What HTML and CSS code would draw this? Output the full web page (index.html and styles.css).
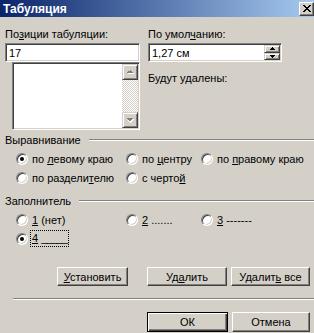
FILE: index.html
```html
<!doctype html>
<html lang="ru">
<head>
    <meta charset="UTF-8">
    <title>Табуляция</title>
    <link rel="stylesheet" href="styles.css">
</head>
<body>
<div class="window">
    <div class="titlebar">
        <span class="title">Табуляция</span>
        <span class="close-btn">
            <svg width="8" height="7" viewBox="0 0 8 7" shape-rendering="crispEdges">
                <path d="M0 0h2v1h-2zM6 0h2v1h-2zM1 1h2v1h-2zM5 1h2v1h-2zM2 2h4v1h-4zM3 3h2v1h-2zM2 4h4v1h-4zM1 5h2v1h-2zM5 5h2v1h-2zM0 6h2v1h-2zM6 6h2v1h-2z" fill="#000"/>
            </svg>
        </span>
    </div>

    <div class="content">
        <div class="top">
            <div class="col">
                <div class="label">По<u>з</u>иции табуляции:</div>
                <div class="edit">17</div>
                <div class="listbox">
                    <div class="list-area"></div>
                    <div class="vscroll">
                        <div class="sbtn">
                            <svg width="7" height="5" viewBox="0 0 7 5" shape-rendering="crispEdges">
                                <path d="M4 1h1v1h1v1h1v1h-6v-1h1v-1h1v-1z" fill="#fff"/>
                                <path d="M3 0h1v1h1v1h1v1h-6v-1h1v-1h1z" fill="#808080"/>
                            </svg>
                        </div>
                        <div class="track"></div>
                        <div class="sbtn">
                            <svg width="7" height="5" viewBox="0 0 7 5" shape-rendering="crispEdges">
                                <path d="M1 1h6v1h-1v1h-1v1h-1v1h-1v-1h-1v-1h-1z" fill="#fff"/>
                                <path d="M0 0h6v1h-1v1h-1v1h-2v-1h-1v-1h-1z" fill="#808080"/>
                            </svg>
                        </div>
                    </div>
                </div>
            </div>
            <div class="col">
                <div class="label">По умол<u>ч</u>анию:</div>
                <div class="edit spin">
                    <span class="spin-text">1,27 см</span>
                    <div class="spin-btns">
                        <div class="spin-btn">
                            <svg width="5" height="3" viewBox="0 0 5 3" shape-rendering="crispEdges"><path d="M2 0h1v1h1v1h1v1h-5v-1h1v-1h1z" fill="#000"/></svg>
                        </div>
                        <div class="spin-btn">
                            <svg width="5" height="3" viewBox="0 0 5 3" shape-rendering="crispEdges"><path d="M0 0h5v1h-1v1h-1v1h-1v-1h-1v-1h-1z" fill="#000"/></svg>
                        </div>
                    </div>
                </div>
                <div class="label deleted">Будут удалены:</div>
            </div>
        </div>

        <div class="group-head"><span>Выравнивание</span><div class="rule"></div></div>
        <div class="radio-grid">
            <div class="radio"><span class="rb checked"></span><span>по <u>л</u>евому краю</span></div>
            <div class="radio"><span class="rb"></span><span>по <u>ц</u>ентру</span></div>
            <div class="radio"><span class="rb"></span><span>по <u>п</u>равому краю</span></div>
            <div class="radio"><span class="rb"></span><span>по раздели<u>т</u>елю</span></div>
            <div class="radio"><span class="rb"></span><span>с черто<u>й</u></span></div>
        </div>

        <div class="group-head fill-head"><span>Заполнитель</span><div class="rule"></div></div>
        <div class="radio-grid">
            <div class="radio"><span class="rb"></span><span><u>1</u> (нет)</span></div>
            <div class="radio"><span class="rb"></span><span><u>2</u> .......</span></div>
            <div class="radio"><span class="rb"></span><span><u>3</u> -------</span></div>
            <div class="radio"><span class="rb checked"></span><span class="focus"><u>4</u> <span class="leader">_____</span></span></div>
        </div>

        <div class="btn-row tab-btns">
            <div class="btn w-set"><span><u>У</u>становить</span></div>
            <div class="btn w-del"><span>Уд<u>а</u>лить</span></div>
            <div class="btn w-all"><span>Удалит<u>ь</u> все</span></div>
        </div>

        <div class="separator"></div>

        <div class="btn-row ok-row">
            <div class="btn default w-ok"><span>ОК</span></div>
            <div class="btn w-cancel"><span>Отмена</span></div>
        </div>
    </div>
</div>
</body>
</html>
```

FILE: styles.css
```css
* {
    box-sizing: border-box;
}
body {
    margin: 0;
    background: #d4d0c8;
    font-family: "Liberation Sans", Arial, sans-serif;
    font-size: 11px;
    color: #000;
}
.window {
    width: 314px;
    height: 333px;
    overflow: hidden;
}

/* заголовок окна */
.titlebar {
    height: 17px;
    display: flex;
    align-items: center;
    justify-content: space-between;
    padding-left: 3px;
    background: linear-gradient(to right, #0a246a, #a6caf0);
}
.title {
    color: #fff;
    font-weight: bold;
    font-size: 12px;
}
.close-btn {
    width: 15px;
    height: 14px;
    display: flex;
    align-items: center;
    justify-content: center;
    background: #d4d0c8;
    border: 1px solid;
    border-color: #fff #404040 #404040 #fff;
    box-shadow: inset -1px -1px #808080;
}

.content {
    padding: 11px 0 0 5px;
}
.label {
    line-height: 13px;
    height: 13px;
    white-space: nowrap;
}

/* верхняя часть */
.top {
    display: grid;
    grid-template-columns: 135px 134px;
    column-gap: 8px;
}
.edit {
    margin-top: 2px;
    height: 19px;
    background: #fff;
    border: 1px solid;
    border-color: #808080 #fff #fff #808080;
    box-shadow: inset 1px 1px #404040, inset -1px -1px #d4d0c8;
    padding-left: 3px;
    display: flex;
    align-items: center;
}
.listbox {
    margin: 0 0 0 7px;
    width: 128px;
    height: 68px;
    display: flex;
    border: 1px solid;
    border-color: #808080 #fff #fff #808080;
    padding: 1px;
    box-shadow: inset 1px 1px #404040, inset -1px -1px #d4d0c8;
    background: #fff;
}
.list-area {
    flex: 1;
}
.vscroll {
    width: 16px;
    display: flex;
    flex-direction: column;
}
.sbtn {
    height: 16px;
    display: flex;
    align-items: center;
    justify-content: center;
    background: #d4d0c8;
    border: 1px solid;
    border-color: #d4d0c8 #404040 #404040 #d4d0c8;
    box-shadow: inset 1px 1px #fff, inset -1px -1px #808080;
}
.track {
    flex: 1;
    background: repeating-conic-gradient(#fff 0 25%, #d4d0c8 0 50%) 0 0 / 2px 2px;
}

.spin {
    justify-content: space-between;
    padding-right: 1px;
}
.spin-btns {
    width: 16px;
    height: 15px;
    display: flex;
    flex-direction: column;
}
.spin-btn {
    flex: 1;
    display: flex;
    align-items: center;
    justify-content: center;
    background: #d4d0c8;
    border: 1px solid;
    border-color: #d4d0c8 #404040 #404040 #d4d0c8;
    box-shadow: inset 1px 1px #fff, inset -1px -1px #808080;
}
.deleted {
    margin-top: 10px;
}

/* группы */
.group-head {
    display: flex;
    align-items: center;
    gap: 8px;
    height: 13px;
    margin-top: 3px;
}
.fill-head {
    margin-top: 7px;
}
.rule {
    flex: 1;
    height: 2px;
    border-top: 1px solid #808080;
    border-bottom: 1px solid #fff;
}
.radio-grid {
    display: grid;
    grid-template-columns: 110px 75px auto;
    grid-auto-rows: 19px;
    padding-left: 11px;
    margin-top: 3px;
}
.radio {
    display: flex;
    align-items: center;
    gap: 4px;
    white-space: nowrap;
}
.rb {
    flex: none;
    width: 12px;
    height: 12px;
    border-radius: 50%;
    background: #fff;
    border: 1px solid;
    border-color: #808080 #fff #fff #808080;
    box-shadow: inset 1px 1px #404040, inset -1px -1px #d4d0c8;
    display: flex;
    align-items: center;
    justify-content: center;
}
.rb.checked::after {
    content: "";
    width: 4px;
    height: 4px;
    border-radius: 50%;
    background: #000;
}
.focus {
    line-height: 14px;
    padding: 0 1px 1px;
    margin-left: -2px;
    border: 1px dotted #000;
}
.leader {
    letter-spacing: -1px;
}

/* кнопки */
.btn-row {
    display: flex;
    justify-content: flex-end;
    padding-right: 4px;
    gap: 4px;
}
.tab-btns {
    margin-top: 19px;
}
.btn {
    height: 19px;
    display: flex;
    align-items: center;
    justify-content: center;
    white-space: nowrap;
    background: #d4d0c8;
    border: 1px solid;
    border-color: #fff #404040 #404040 #fff;
    box-shadow: inset -1px -1px #808080;
}
.btn.default {
    border-color: #000;
    box-shadow: inset 1px 1px #fff, inset -1px -1px #404040, inset -2px -2px #808080;
}
.w-set { width: 71px; margin-right: 15px; }
.w-del { width: 80px; }
.w-all { width: 79px; }
.w-ok { width: 81px; height: 20px; }
.w-cancel { width: 78px; height: 20px; }

.separator {
    margin: 12px 0 0 8px;
    height: 2px;
    border-top: 1px solid #808080;
    border-bottom: 1px solid #fff;
}
.ok-row {
    margin-top: 12px;
}
```
